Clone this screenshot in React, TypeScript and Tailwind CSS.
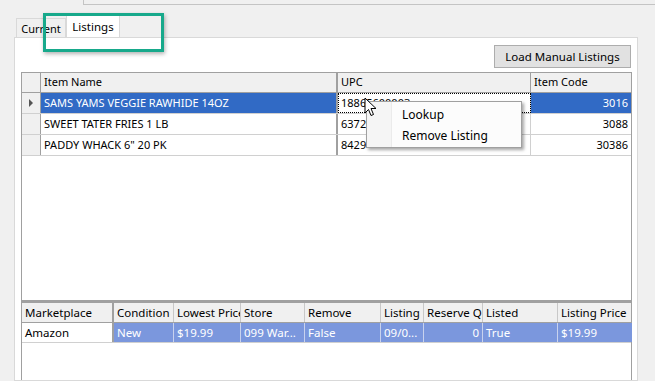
import React from "react";

const font = { fontFamily: '"Noto Sans", "Open Sans", sans-serif' };

type Col = { label: string; w: string };

const topCols: Col[] = [
  { label: "Item Name", w: "w-[297px]" },
  { label: "UPC", w: "w-[193px]" },
  { label: "Item Code", w: "w-[100px]" },
];

const topRows = [
  ["SAMS YAMS VEGGIE RAWHIDE 14OZ", "18865600003", "3016"],
  ["SWEET TATER FRIES 1 LB", "6372", "3088"],
  ['PADDY WHACK 6" 20 PK', "8429", "30386"],
];

const bottomCols: Col[] = [
  { label: "Marketplace", w: "w-[92px]" },
  { label: "Condition", w: "w-[60px]" },
  { label: "Lowest Price", w: "w-[67px]" },
  { label: "Store", w: "w-[64px]" },
  { label: "Remove", w: "w-[76px]" },
  { label: "Listing", w: "w-[43px]" },
  { label: "Reserve Q", w: "w-[59px]" },
  { label: "Listed", w: "w-[75px]" },
  { label: "Listing Price", w: "w-[74px]" },
];

const bottomRow = ["Amazon", "New", "$19.99", "099 War...", "False", "09/0...", "0", "True", "$19.99"];

function Cursor() {
  return (
    <svg className="absolute left-[364px] top-[97px]" width="13" height="20" viewBox="0 0 13 20">
      <path d="M1 1 L1 16 L4.5 12.5 L7 18.5 L9.5 17.5 L7 11.5 L12 11.5 Z" fill="#fff" stroke="#000" strokeWidth="1" strokeLinejoin="round" />
    </svg>
  );
}

function ContextMenu() {
  return (
    <div className="absolute left-[366px] top-[101px] flex h-[47px] w-[156px] border border-[#a0a0a0] bg-[#fcfcfc] shadow-[2px_2px_3px_rgba(0,0,0,0.35)]">
      <div className="w-[25px] border-r border-[#ebebeb] bg-[#f5f5f5]" />
      <div className="flex flex-1 flex-col pt-[2px] text-[12px] text-black">
        <div className="flex h-[22px] items-center pl-[10px]">Lookup</div>
        <div className="flex h-[22px] items-center pl-[10px]">Remove Listing</div>
      </div>
    </div>
  );
}

export default function App() {
  return (
    <div className="relative flex h-[381px] w-[655px] flex-col overflow-hidden bg-[#f0f0f0] text-[11px] text-black" style={font}>
      {/* panel above */}
      <div className="ml-[83px] h-[5px] border-b border-l border-[#c4c4c4]" />

      {/* tab strip */}
      <div className="mt-[10px] ml-[14px] flex h-[22px] items-end">
        <div className="ml-[2px] flex h-[19px] w-[50px] items-center justify-center border border-b-0 border-[#d9d9d9] bg-[#f0f0f0] pt-[1px] leading-none">
          Current
        </div>
        <div className="-mb-px flex h-[23px] w-[54px] items-center justify-center border border-b-0 border-[#d9d9d9] bg-white pb-[1px] text-[11.5px] leading-none">
          Listings
        </div>
      </div>

      {/* tab page */}
      <div className="ml-[14px] flex w-[624px] flex-1 flex-col border border-[#d9d9d9] bg-white">
        <div className="flex justify-end pt-[7px] pr-[6px]">
          <button className="h-[23px] w-[137px] border border-[#adadad] bg-[#e1e1e1] text-[11.5px]">
            Load Manual Listings
          </button>
        </div>

        {/* upper grid */}
        <div className="mt-[4px] ml-[6px] flex h-[229px] w-[611px] flex-col border border-[#a0a0a0] bg-white">
          <div className="flex h-[20px] border-b border-[#a0a0a0] bg-[#f0f0f0]">
            <div className="w-[19px] border-r border-[#a0a0a0]" />
            {topCols.map((c, i) => (
              <div
                key={c.label}
                className={`${c.w} flex items-center px-[3px] ${i === 0 ? "border-r-2 border-[#a0a0a0]" : i === 1 ? "border-r border-[#a0a0a0]" : ""}`}
              >
                {c.label}
              </div>
            ))}
          </div>
          {topRows.map((r, ri) => (
            <div key={r[0]} className="flex h-[21px] border-b border-[#d0d0d0]">
              <div className="flex w-[19px] items-center justify-center border-r border-[#a0a0a0] bg-[#f0f0f0]">
                {ri === 0 && (
                  <svg width="5" height="8" viewBox="0 0 5 8">
                    <path d="M0 0 L4 4 L0 8 Z" fill="#555" />
                  </svg>
                )}
              </div>
              <div
                className={`flex w-[297px] items-center border-r-2 border-[#a0a0a0] px-[3px] whitespace-nowrap ${ri === 0 ? "bg-[#316ac5] text-white" : ""}`}
              >
                {r[0]}
              </div>
              <div
                className={`flex w-[193px] items-center overflow-hidden border-r border-[#d0d0d0] px-[3px] whitespace-nowrap ${ri === 0 ? "outline outline-1 -outline-offset-1 outline-dotted outline-black" : ""}`}
              >
                {r[1]}
              </div>
              <div className={`flex w-[100px] items-center justify-end px-[3px] ${ri === 0 ? "bg-[#316ac5] text-white" : ""}`}>
                {r[2]}
              </div>
            </div>
          ))}
        </div>

        {/* lower grid */}
        <div className="ml-[6px] flex w-[611px] flex-1 flex-col border-x border-t-2 border-[#a0a0a0] bg-white">
          <div className="flex h-[20px] border-b border-[#a0a0a0] bg-[#f0f0f0] text-[11.5px]">
            {bottomCols.map((c, i) => (
              <div
                key={c.label}
                className={`${c.w} flex shrink-0 items-center overflow-hidden px-[3px] whitespace-nowrap ${i === 0 ? "border-r-2 border-[#a0a0a0]" : i < bottomCols.length - 1 ? "border-r border-[#c8c8c8]" : ""}`}
              >
                {c.label}
              </div>
            ))}
          </div>
          <div className="flex h-[20px] border-b border-[#d0d0d0] text-[11.5px]">
            {bottomRow.map((v, i) => (
              <div
                key={i}
                className={`${bottomCols[i].w} flex shrink-0 items-center overflow-hidden px-[3px] whitespace-nowrap ${i === 6 ? "justify-end" : ""} ${i === 0 ? "border-r-2 border-[#a0a0a0]" : "bg-[#7b97dd] text-white"} ${i > 0 && i < bottomRow.length - 1 ? "border-r border-[#c8d2ee]" : ""}`}
              >
                {v}
              </div>
            ))}
          </div>
        </div>
      </div>

      {/* highlight box */}
      <div className="pointer-events-none absolute left-[43px] top-[13px] h-[39px] w-[121px] border-[3px] border-[#17a98b] shadow-[1px_2px_4px_rgba(0,0,0,0.3)]" />

      <ContextMenu />
      <Cursor />
    </div>
  );
}
